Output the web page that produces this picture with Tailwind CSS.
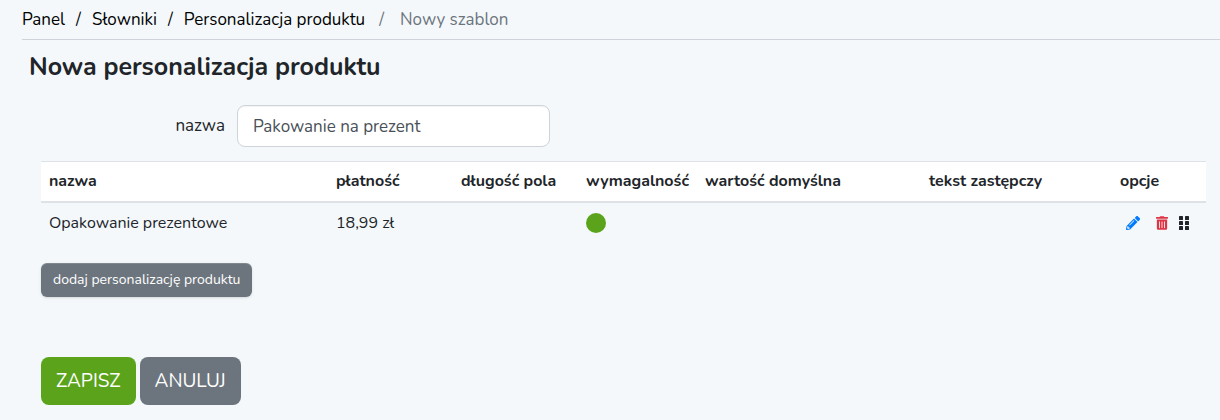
<!DOCTYPE html>
<html lang="pl">

<head>
    <meta charset="UTF-8">
    <meta name="viewport" content="width=device-width, initial-scale=1.0">
    <script src="https://cdn.jsdelivr.net/npm/@tailwindcss/browser@4"></script>
    <title>Nowa personalizacja produktu</title>
</head>

<body class="bg-[#f4f8fb] font-['Nunito','Lato',sans-serif] text-base leading-6 text-[#212529]">
    <nav class="ml-[22px] pt-2 pb-[7px] border-b border-[#ced4da]" aria-label="breadcrumb">
        <ol class="flex text-[17px] text-black">
            <li><a href="#">Panel</a></li>
            <li class="before:content-['/'] before:px-[11px]"><a href="#">Słowniki</a></li>
            <li class="before:content-['/'] before:px-[11px]"><a href="#">Personalizacja produktu</a></li>
            <li class="before:content-['/'] before:pl-[14px] before:pr-4 text-[#6c757d]" aria-current="page">Nowy szablon</li>
        </ol>
    </nav>

    <main class="pl-[41px] pr-[14px]">
        <h1 class="-ml-3 mt-3 text-[25px] leading-[30px] font-bold">Nowa personalizacja produktu</h1>

        <form id="template-form" class="mt-[23px] flex items-center gap-3">
            <label for="name" class="w-[184px] text-right text-[17px]">nazwa</label>
            <input type="text" name="name" id="name" value="Pakowanie na prezent"
                class="w-[313px] h-[42px] px-[15px] text-[17px] text-[#495057] bg-white border border-[#ced4da] rounded-lg inset-shadow-xs">
        </form>

        <table class="mt-[14px] w-full table-fixed text-left">
            <colgroup>
                <col>
                <col class="w-[125px]">
                <col class="w-[125px]">
                <col class="w-[119px]">
                <col class="w-[224px]">
                <col class="w-[191px]">
                <col class="w-[94px]">
            </colgroup>
            <thead class="bg-white border-t border-b-2 border-t-[#dee2e6] border-b-[#dee2e6]">
                <tr class="whitespace-nowrap">
                    <th class="px-2 pt-[7px] pb-2">nazwa</th>
                    <th class="px-2 pt-[7px] pb-2">płatność</th>
                    <th class="px-2 pt-[7px] pb-2">długość pola</th>
                    <th class="px-2 pt-[7px] pb-2">wymagalność</th>
                    <th class="px-2 pt-[7px] pb-2">wartość domyślna</th>
                    <th class="px-2 pt-[7px] pb-2">tekst zastępczy</th>
                    <th class="px-2 pt-[7px] pb-2">opcje</th>
                </tr>
            </thead>
            <tbody>
                <tr>
                    <td class="p-2">Opakowanie prezentowe</td>
                    <td class="p-2">18,99 zł</td>
                    <td class="p-2"></td>
                    <td class="p-2">
                        <div class="size-5 rounded-full bg-[#5aa31a]"></div>
                    </td>
                    <td class="p-2"></td>
                    <td class="p-2"></td>
                    <td class="py-2 pl-[14px]">
                        <div class="flex items-center">
                            <button type="button" aria-label="edytuj" class="text-[#007bff] cursor-pointer">
                                <svg class="size-[14px]" viewBox="0 0 512 512" fill="currentColor">
                                    <path d="M498 142l-46 46c-5 5-12 5-17 0L324 77c-5-5-5-12 0-17l46-46c19-19 49-19 68 0l60 60c19 19 19 49 0 68zm-214-42L22 362 0 484c-3 16 12 31 28 28l122-22 262-262c5-5 5-12 0-17L301 100c-5-5-12-5-17 0zM124 340c-5-6-5-14 0-20l154-154c6-5 14-5 20 0s5 14 0 20L144 340c-6 5-14 5-20 0zm-36 84h48v36l-64 12-32-31 12-65h36v48z" />
                                </svg>
                            </button>
                            <button type="button" aria-label="usuń" class="ml-4 text-[#dc3545] cursor-pointer">
                                <svg class="w-[12px] h-[14px]" viewBox="0 0 448 512" fill="currentColor">
                                    <path d="M32 464a48 48 0 0 0 48 48h288a48 48 0 0 0 48-48V128H32zm272-256a16 16 0 0 1 32 0v224a16 16 0 0 1-32 0zm-96 0a16 16 0 0 1 32 0v224a16 16 0 0 1-32 0zm-96 0a16 16 0 0 1 32 0v224a16 16 0 0 1-32 0zM432 32H312l-9-19A24 24 0 0 0 281 0H167a24 24 0 0 0-22 13l-9 19H16A16 16 0 0 0 0 48v32a16 16 0 0 0 16 16h416a16 16 0 0 0 16-16V48a16 16 0 0 0-16-16z" />
                                </svg>
                            </button>
                            <button type="button" aria-label="przesuń" class="ml-[11px] cursor-move">
                                <svg class="w-[10px] h-[14px]" viewBox="0 0 10 14" fill="currentColor">
                                    <rect width="4" height="4" rx="0.6" />
                                    <rect x="6" width="4" height="4" rx="0.6" />
                                    <rect y="5" width="4" height="4" rx="0.6" />
                                    <rect x="6" y="5" width="4" height="4" rx="0.6" />
                                    <rect y="10" width="4" height="4" rx="0.6" />
                                    <rect x="6" y="10" width="4" height="4" rx="0.6" />
                                </svg>
                            </button>
                        </div>
                    </td>
                </tr>
            </tbody>
        </table>

        <button type="button"
            class="mt-5 block h-[34px] px-3 text-sm text-white bg-[#6c757d] rounded-md shadow-sm inset-shadow-[0_1px_0_#ffffff26] cursor-pointer">dodaj personalizację produktu</button>

        <div class="mt-[60px] pb-[15px] flex gap-1 text-[19px] text-white">
            <button type="submit" form="template-form" class="h-12 px-[15px] bg-[#5aa31a] rounded-lg cursor-pointer">ZAPISZ</button>
            <button type="button" class="h-12 px-[15px] bg-[#6c757d] rounded-lg cursor-pointer">ANULUJ</button>
        </div>
    </main>
</body>

</html>
